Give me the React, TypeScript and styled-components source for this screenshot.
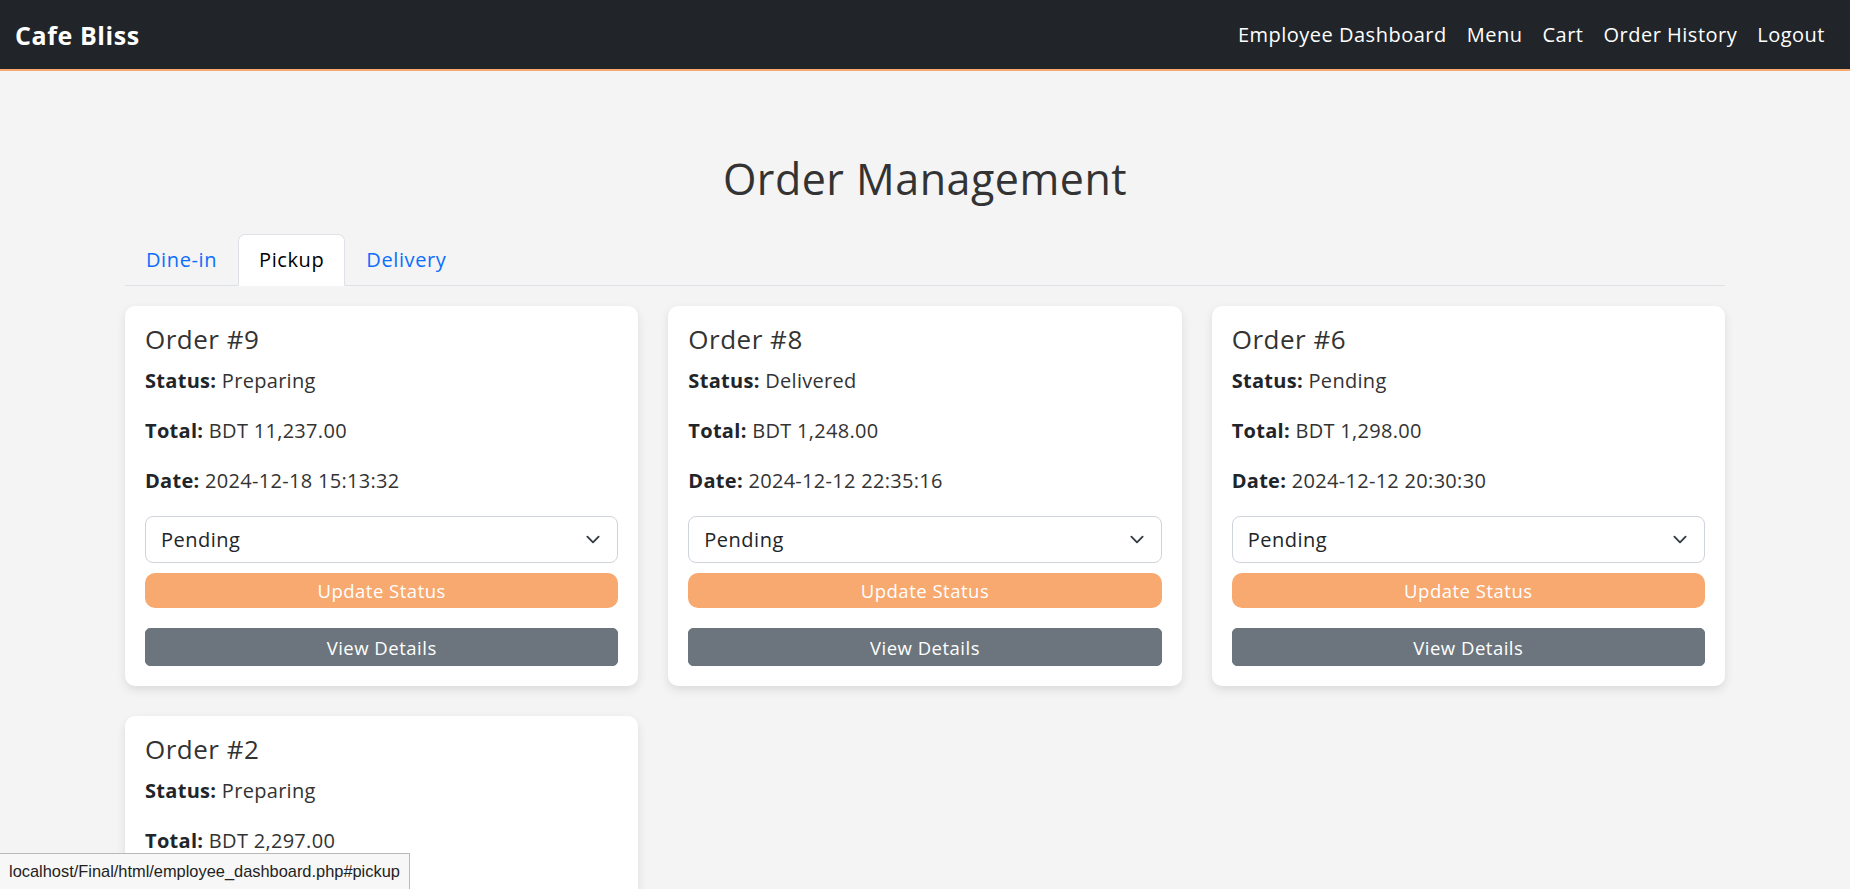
import React from "react";
import styled, { createGlobalStyle } from "styled-components";

const GlobalStyle = createGlobalStyle`
  * { box-sizing: border-box; }
  body {
    margin: 0;
    background: #f4f4f4;
    font-family: "Open Sans", "Noto Sans", sans-serif;
    color: #333;
    letter-spacing: 0.3px;
  }
`;

const Navbar = styled.nav`
  height: 71px;
  background: #212529;
  border-bottom: 2px solid #f8a96f;
  display: flex;
  align-items: center;
  justify-content: space-between;
  padding: 0 15px;
`;

const Brand = styled.a`
  color: #fff;
  font-size: 25px;
  font-weight: 700;
  text-decoration: none;
  letter-spacing: 0.6px;
`;

const NavList = styled.div`
  display: flex;
  align-items: center;
`;

const NavLink = styled.a`
  color: #fff;
  font-size: 20px;
  padding: 0 10px;
  text-decoration: none;
  letter-spacing: 0.5px;
`;

const Container = styled.main`
  width: 1600px;
  margin: 0 auto;
`;

const Title = styled.h2`
  margin: 84px 0 31px;
  font-size: 43px;
  line-height: 48px;
  font-weight: 400;
  text-align: center;
  color: #333;
  letter-spacing: 0.5px;
`;

const Tabs = styled.div`
  display: flex;
  border-bottom: 1px solid #dee2e6;
`;

const Tab = styled.a<{ $active?: boolean }>`
  display: block;
  padding: 10px 20px;
  font-size: 20px;
  line-height: 30px;
  letter-spacing: 0.6px;
  margin-bottom: -1px;
  border: 1px solid ${(p) => (p.$active ? "#dee2e6" : "transparent")};
  border-bottom-color: ${(p) => (p.$active ? "#fff" : "transparent")};
  border-radius: 7px 7px 0 0;
  background: ${(p) => (p.$active ? "#fff" : "transparent")};
  color: ${(p) => (p.$active ? "#000" : "#0d6efd")};
  text-decoration: none;
`;

const Grid = styled.div`
  display: grid;
  grid-template-columns: repeat(3, 1fr);
  gap: 30px;
  margin-top: 20px;
`;

const Card = styled.div`
  background: #fff;
  border-radius: 10px;
  box-shadow: 0 4px 10px rgba(0, 0, 0, 0.1);
  padding: 20px;
`;

const CardTitle = styled.h5`
  margin: 0 0 14px;
  font-size: 26px;
  line-height: 26px;
  font-weight: 400;
  color: #333;
  letter-spacing: 0.5px;
`;

const Field = styled.p`
  margin: 0 0 20px;
  font-size: 20px;
  line-height: 30px;
  color: #333;
`;

const Label = styled.strong`
  font-weight: 700;
  color: #212529;
`;

const SelectWrap = styled.div`
  position: relative;
`;

const Select = styled.select`
  width: 100%;
  height: 47px;
  appearance: none;
  -webkit-appearance: none;
  background: #fff;
  border: 1px solid #ced4da;
  border-radius: 8px;
  padding: 0 50px 0 15px;
  font-family: inherit;
  font-size: 20px;
  letter-spacing: 0.5px;
  color: #212529;
`;

const Chevron = styled.svg`
  position: absolute;
  right: 15px;
  top: 16px;
  width: 20px;
  height: 15px;
  pointer-events: none;
`;

const UpdateButton = styled.button`
  display: block;
  width: 100%;
  height: 35px;
  margin-top: 10px;
  border: none;
  border-radius: 10px;
  background: #f8a96f;
  color: #fff;
  font-family: inherit;
  font-size: 18.5px;
  letter-spacing: 0.5px;
`;

const DetailsButton = styled.button`
  display: block;
  width: 100%;
  height: 38px;
  margin-top: 20px;
  border: 1px solid #6c757d;
  border-radius: 5px;
  background: #6c757d;
  color: #fff;
  font-family: inherit;
  font-size: 18.5px;
  letter-spacing: 0.5px;
`;

const StatusBubble = styled.div`
  position: fixed;
  left: 0;
  bottom: 0;
  height: 36px;
  padding: 0 9px;
  display: flex;
  align-items: center;
  background: #f7f7f7;
  border-top: 1px solid #b9b9b9;
  border-right: 1px solid #b9b9b9;
  font-family: "Liberation Sans", Arial, sans-serif;
  font-size: 16.4px;
  letter-spacing: 0;
  color: #222;
`;

type Order = { id: number; status: string; total: string; date: string };

const orders: Order[] = [
  { id: 9, status: "Preparing", total: "BDT 11,237.00", date: "2024-12-18 15:13:32" },
  { id: 8, status: "Delivered", total: "BDT 1,248.00", date: "2024-12-12 22:35:16" },
  { id: 6, status: "Pending", total: "BDT 1,298.00", date: "2024-12-12 20:30:30" },
  { id: 2, status: "Preparing", total: "BDT 2,297.00", date: "2024-12-10 19:10:01" },
];

function OrderCard({ order }: { order: Order }) {
  return (
    <Card>
      <CardTitle>Order #{order.id}</CardTitle>
      <Field>
        <Label>Status:</Label> {order.status}
      </Field>
      <Field>
        <Label>Total:</Label> {order.total}
      </Field>
      <Field>
        <Label>Date:</Label> {order.date}
      </Field>
      <SelectWrap>
        <Select defaultValue="Pending">
          <option>Pending</option>
          <option>Preparing</option>
          <option>Delivered</option>
        </Select>
        <Chevron viewBox="0 0 16 16" fill="none">
          <path d="m2 5 6 6 6-6" stroke="#343a40" strokeWidth="2" strokeLinecap="round" strokeLinejoin="round" />
        </Chevron>
      </SelectWrap>
      <UpdateButton>Update Status</UpdateButton>
      <DetailsButton>View Details</DetailsButton>
    </Card>
  );
}

export default function App() {
  return (
    <>
      <GlobalStyle />
      <Navbar>
        <Brand href="#">Cafe Bliss</Brand>
        <NavList>
          <NavLink href="#">Employee Dashboard</NavLink>
          <NavLink href="#">Menu</NavLink>
          <NavLink href="#">Cart</NavLink>
          <NavLink href="#">Order History</NavLink>
          <NavLink href="#">Logout</NavLink>
        </NavList>
      </Navbar>
      <Container>
        <Title>Order Management</Title>
        <Tabs>
          <Tab href="#">Dine-in</Tab>
          <Tab href="#" $active>Pickup</Tab>
          <Tab href="#">Delivery</Tab>
        </Tabs>
        <Grid>
          {orders.map((o) => (
            <OrderCard key={o.id} order={o} />
          ))}
        </Grid>
      </Container>
      <StatusBubble>localhost/Final/html/employee_dashboard.php#pickup</StatusBubble>
    </>
  );
}
